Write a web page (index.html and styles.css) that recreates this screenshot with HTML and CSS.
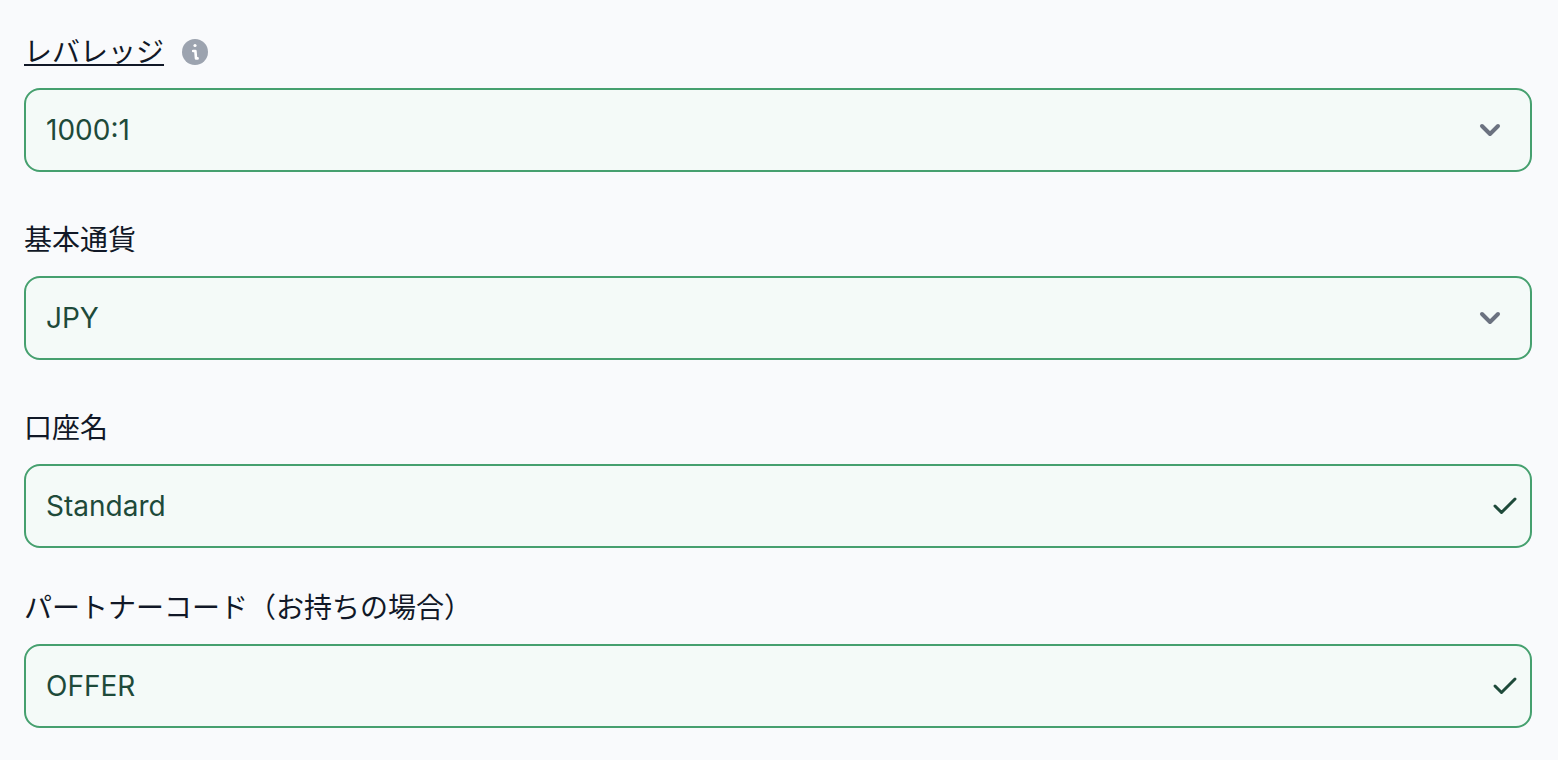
FILE: index.html
```html
<!DOCTYPE html>
<html lang="ja">
<head>
  <meta charset="UTF-8">
  <title>口座開設</title>
  <link rel="stylesheet" href="styles.css">
</head>
<body>

  <form class="account-form">
    <div class="field">
      <div class="label-row">
        <label class="term" for="leverage">レバレッジ</label>
        <svg class="info" viewBox="0 0 26 26" aria-hidden="true">
          <circle cx="13" cy="13" r="13" fill="#9ca3af" />
          <circle cx="13" cy="6.5" r="1.6" fill="#fff" />
          <path d="M11.2 12h2.2l.6 7.4h1.6" fill="none" stroke="#fff" stroke-width="2.6" stroke-linecap="round" stroke-linejoin="round" />
        </svg>
      </div>
      <div class="control">
        <select id="leverage">
          <option>1000:1</option>
        </select>
        <svg class="chevron" viewBox="0 0 24 24" aria-hidden="true">
          <path d="M4 8l8 8 8-8" />
        </svg>
      </div>
    </div>

    <div class="field">
      <div class="label-row">
        <label for="currency">基本通貨</label>
      </div>
      <div class="control">
        <select id="currency">
          <option>JPY</option>
        </select>
        <svg class="chevron" viewBox="0 0 24 24" aria-hidden="true">
          <path d="M4 8l8 8 8-8" />
        </svg>
      </div>
    </div>

    <div class="field compact">
      <div class="label-row">
        <label for="accountName">口座名</label>
      </div>
      <div class="control">
        <input id="accountName" type="text" value="Standard">
        <svg class="check" viewBox="0 0 26 20" aria-hidden="true">
          <path d="M3 10l6.5 6.5L23 3" />
        </svg>
      </div>
    </div>

    <div class="field">
      <div class="label-row">
        <label for="partnerCode">パートナーコード（お持ちの場合）</label>
      </div>
      <div class="control">
        <input id="partnerCode" type="text" value="OFFER">
        <svg class="check" viewBox="0 0 26 20" aria-hidden="true">
          <path d="M3 10l6.5 6.5L23 3" />
        </svg>
      </div>
    </div>
  </form>

</body>
</html>
```

FILE: styles.css
```css
* {
  box-sizing: border-box;
}

body {
  margin: 0;
  background: #f9fafc;
  color: #111827;
  font-family: Inter, "Noto Sans CJK JP", sans-serif;
  font-size: 28px;
}

.account-form {
  padding: 32px 26px 32px 24px;
}

.field {
  margin-bottom: 48px;
}

.field.compact {
  margin-bottom: 40px;
}

.field:last-child {
  margin-bottom: 0;
}

.label-row {
  display: flex;
  align-items: center;
  gap: 18px;
  height: 40px;
  margin-bottom: 16px;
  line-height: 40px;
}

.term {
  text-decoration: underline;
  text-decoration-thickness: 2px;
  text-underline-offset: 2px;
  text-decoration-skip-ink: none;
}

.info {
  width: 26px;
  height: 26px;
}

.control {
  display: grid;
  align-items: center;
}

.control > * {
  grid-area: 1 / 1;
}

select,
input {
  width: 100%;
  height: 84px;
  padding: 0 20px;
  border: 2px solid #46a06f;
  border-radius: 16px;
  background: #f4faf8;
  color: #1e4a3a;
  font: inherit;
  appearance: none;
}

.chevron,
.check {
  justify-self: end;
  fill: none;
  stroke-linecap: round;
  stroke-linejoin: round;
  pointer-events: none;
}

.chevron {
  width: 24px;
  height: 24px;
  margin-right: 30px;
  stroke: #6b7280;
  stroke-width: 4;
}

.check {
  width: 26px;
  height: 20px;
  margin-right: 14px;
  stroke: #1e4a3a;
  stroke-width: 3;
}
```
